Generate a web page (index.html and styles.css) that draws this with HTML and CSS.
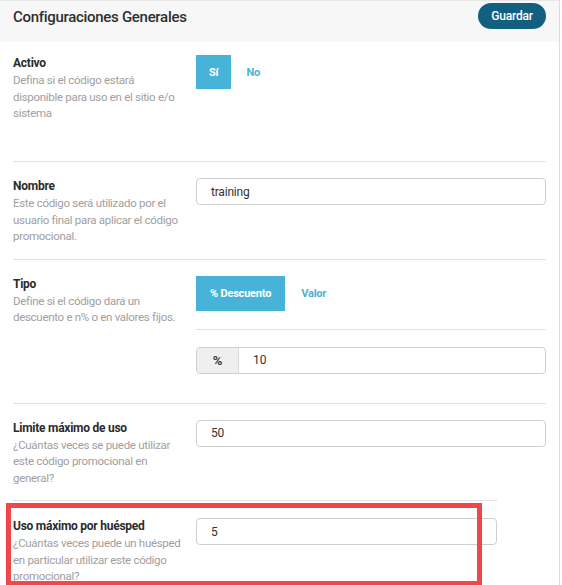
FILE: index.html
```html
<!DOCTYPE html>
<html lang="es">
<head>
<meta charset="utf-8">
<title>Configuraciones Generales</title>
<link rel="stylesheet" href="styles.css">
</head>
<body>
<div class="panel">
  <div class="panel-header">
    <h2 class="panel-title">Configuraciones Generales</h2>
    <button class="btn-save">Guardar</button>
  </div>
  <div class="panel-body">
    <div class="row row-first">
      <div class="label-col">
        <div class="label">Activo</div>
        <div class="desc">Defina si el código estará disponible para uso en el sitio e/o sistema</div>
      </div>
      <div class="control-col">
        <div class="toggle">
          <span class="opt active">Sí</span>
          <span class="opt">No</span>
        </div>
      </div>
    </div>
    <div class="row">
      <div class="label-col">
        <div class="label">Nombre</div>
        <div class="desc">Este código será utilizado por el usuario final para aplicar el código promocional.</div>
      </div>
      <div class="control-col">
        <div class="input">training</div>
      </div>
    </div>
    <div class="row row-type">
      <div class="label-col">
        <div class="label">Tipo</div>
        <div class="desc">Define si el código dará un descuento e n% o en valores fijos.</div>
      </div>
      <div class="control-col">
        <div class="toggle toggle-wide">
          <span class="opt active">% Descuento</span>
          <span class="opt">Valor</span>
        </div>
        <div class="inner-sep"></div>
        <div class="input-group">
          <span class="addon">%</span>
          <span class="group-value">10</span>
        </div>
      </div>
    </div>
    <div class="row">
      <div class="label-col">
        <div class="label">Limite máximo de uso</div>
        <div class="desc">¿Cuántas veces se puede utilizar este código promocional en general?</div>
      </div>
      <div class="control-col">
        <div class="input">50</div>
      </div>
    </div>
    <div class="row row-cut">
      <div class="label-col">
        <div class="label">Uso máximo por huésped</div>
        <div class="desc">¿Cuántas veces puede un huésped en particular utilizar este código promocional?</div>
      </div>
      <div class="control-col">
        <div class="input">5</div>
      </div>
    </div>
  </div>
  <div class="highlight"></div>
</div>
</body>
</html>
```

FILE: styles.css
```css
* { box-sizing: border-box; }
html, body { margin: 0; padding: 0; background: #fff; }
body {
  font-family: Roboto, "Noto Sans", Arial, sans-serif;
  color: #333;
  height: 585px;
  overflow: hidden;
}
.panel {
  position: relative;
  width: 560px;
  height: 585px;
  border-right: 1px solid #dcdcdc;
  border-top: 1px solid #e8e8e8;
  background: #fff;
}
.panel-header {
  display: flex;
  justify-content: space-between;
  align-items: flex-start;
  height: 41px;
  padding: 2px 13px 0 13px;
  background: #f7f7f7;
}
.panel-title {
  margin: 4px 0 0 0;
  font-size: 15px;
  letter-spacing: -0.3px;
  font-weight: 500;
  color: #2f2f2f;
  line-height: 20px;
}
.btn-save {
  border: none;
  background: #135f80;
  color: #fff;
  font-family: inherit;
  font-size: 12px;
  letter-spacing: -0.2px;
  font-weight: 500;
  height: 26px;
  width: 68px;
  padding: 0;
  border-radius: 13px;
}
.panel-body { padding: 0 0 0 13px; }
.row {
  display: grid;
  grid-template-columns: 183px 1fr;
  padding: 16px 0 14px 0;
  margin-right: 13px;
  border-top: 1px solid #e2e2e2;
}
.row-first {
  border-top: none;
  padding-top: 13px;
  height: 119px;
}
.row-type { padding-bottom: 29px; }
.row-cut { margin-right: 62px; padding-top: 17px; }
.label-col { padding-right: 10px; }
.label {
  font-size: 12px;
  letter-spacing: -0.25px;
  font-weight: 700;
  line-height: 16px;
  color: #2b2b2b;
}
.desc {
  font-size: 11.5px;
  letter-spacing: -0.3px;
  line-height: 16.5px;
  color: #a0a0a0;
  margin-top: 1px;
}
.toggle { display: flex; align-items: stretch; height: 34px; }
.opt {
  display: flex;
  align-items: center;
  padding: 0 13px;
  font-size: 11px;
  letter-spacing: -0.2px;
  font-weight: 700;
  color: #48b3d8;
}
.opt + .opt { padding-left: 15px; }
.opt.active { background: #48b3d8; color: #fff; }
.toggle-wide { height: 35px; }
.toggle-wide .opt { padding: 0 14px; }
.toggle-wide .opt + .opt { padding-left: 16px; }
.input {
  height: 27px;
  border: 1px solid #cfcfcf;
  border-radius: 4px;
  display: flex;
  align-items: center;
  padding-left: 14px;
  font-size: 12px;
  letter-spacing: -0.2px;
  color: #333;
}
.inner-sep {
  height: 1px;
  background: #e2e2e2;
  margin: 18px 0 17px 0;
}
.input-group {
  display: flex;
  height: 27px;
  border: 1px solid #cfcfcf;
  border-radius: 4px;
  overflow: hidden;
  font-size: 12px;
}
.addon {
  width: 42px;
  background: #efefef;
  border-right: 1px solid #d8d8d8;
  display: flex;
  align-items: center;
  justify-content: center;
  font-size: 13px;
  font-weight: 700;
  color: #3a3a3a;
}
.group-value {
  display: flex;
  align-items: center;
  padding-left: 14px;
  color: #333;
}
.highlight {
  position: absolute;
  left: 6px;
  top: 502px;
  width: 476px;
  height: 83px;
  border: 5px solid #f0474a;
  pointer-events: none;
}
```
